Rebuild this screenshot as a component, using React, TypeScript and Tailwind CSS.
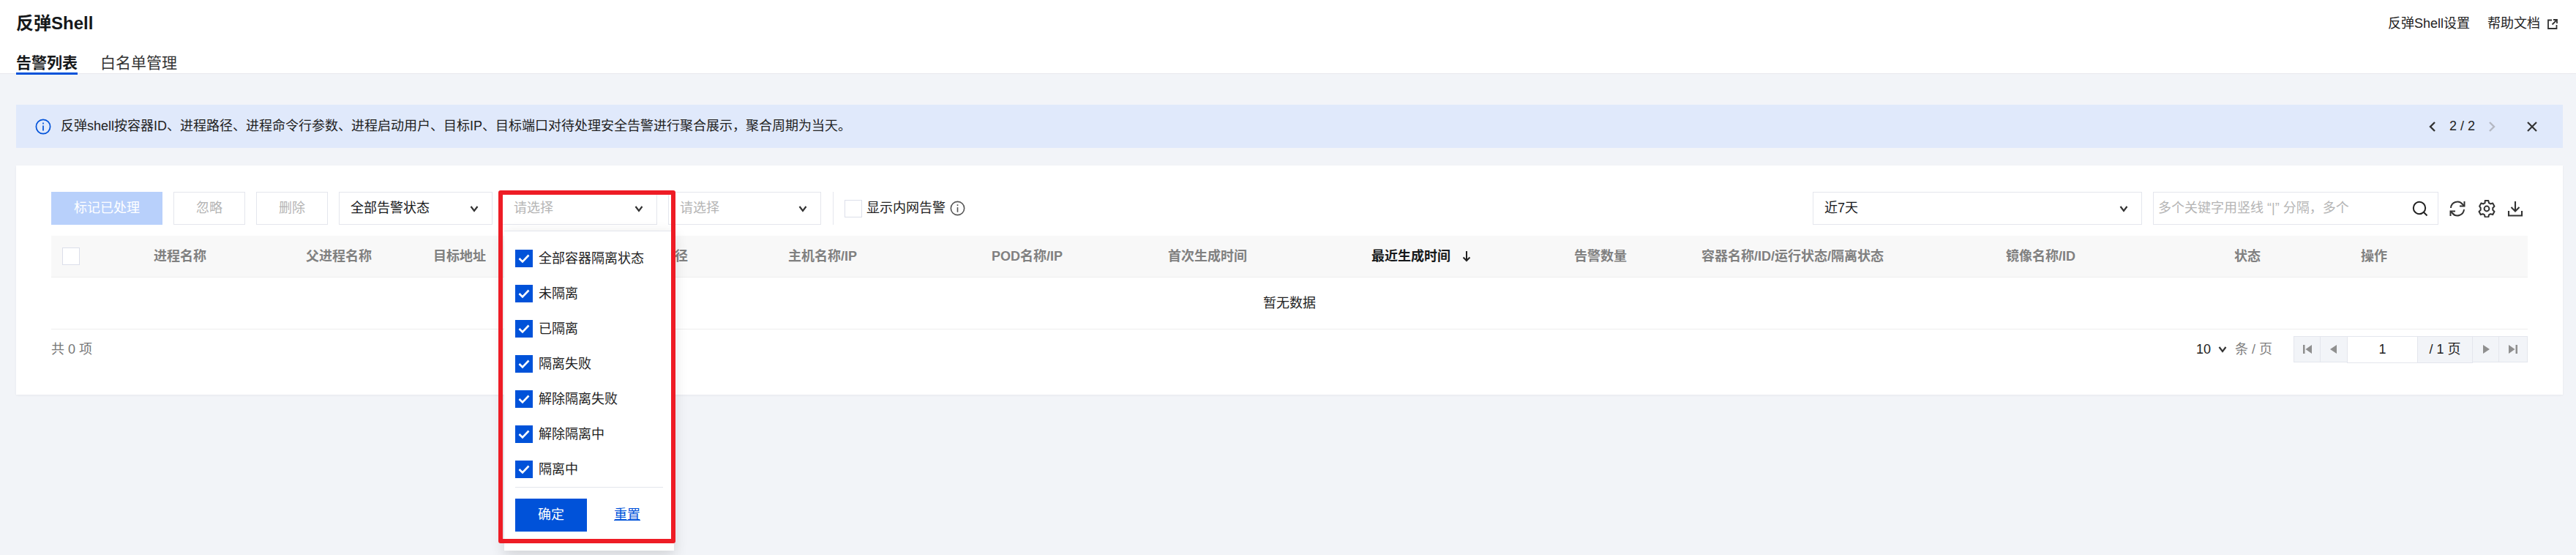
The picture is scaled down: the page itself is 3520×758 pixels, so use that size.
import React from "react";

const Chevron = ({ className = "" }: { className?: string }) => (
  <svg width="14" height="14" viewBox="0 0 14 14" fill="none" stroke="currentColor" strokeWidth="2.2" className={className}>
    <path d="M2.5 4 L7 10 L11.5 4" />
  </svg>
);

const Check = () => (
  <span className="w-[24px] h-[24px] bg-[#0052d9] flex items-center justify-center shrink-0">
    <svg width="18" height="18" viewBox="0 0 18 18" fill="none" stroke="#fff" strokeWidth="2.6">
      <path d="M2.5 9 L7 13.5 L15.5 4.5" />
    </svg>
  </span>
);

const Box = ({ className = "" }: { className?: string }) => (
  <span className={`block w-[24px] h-[24px] bg-white border border-[#dcdfea] ${className}`} />
);

const Select = ({ width, text, placeholder }: { width: string; text: string; placeholder?: boolean }) => (
  <div className={`${width} h-[45px] border border-[#e4e6ed] bg-white flex items-center justify-between pl-[15px] pr-[17px] text-[18px] ${placeholder ? "text-[#b5b5b5]" : "text-[#16181a]"}`}>
    <span>{text}</span>
    <Chevron className="text-[#333]" />
  </div>
);

const Info = ({ color, size }: { color: string; size: number }) => (
  <svg width={size} height={size} viewBox="0 0 22 22" fill="none" stroke={color} strokeWidth="1.7" className="shrink-0">
    <circle cx="11" cy="11" r="9.6" />
    <path d="M11 9.5 V16.5" />
    <path d="M11 5.5 V7.5" />
  </svg>
);

const columns: { label: string; cls: string; active?: boolean }[] = [
  { label: "进程名称", cls: "w-[208px]" },
  { label: "父进程名称", cls: "w-[174px]" },
  { label: "目标地址", cls: "w-[276px]" },
  { label: "进程路径", cls: "w-[209px]" },
  { label: "主机名称/IP", cls: "w-[278px]" },
  { label: "POD名称/IP", cls: "w-[241px]" },
  { label: "首次生成时间", cls: "w-[278px]" },
  { label: "最近生成时间", cls: "w-[277px]", active: true },
  { label: "告警数量", cls: "w-[174px]" },
  { label: "容器名称/ID/运行状态/隔离状态", cls: "w-[416px]" },
  { label: "镜像名称/ID", cls: "w-[312px]" },
  { label: "状态", cls: "w-[173px]" },
  { label: "操作", cls: "flex-1" },
];

const options = ["全部容器隔离状态", "未隔离", "已隔离", "隔离失败", "解除隔离失败", "解除隔离中", "隔离中"];

const PageBtn = ({ width, d }: { width: string; d: string }) => (
  <div className={`${width} h-[36px] bg-[#f2f4f8] border border-[#e4e6ed] -ml-px flex items-center justify-center`}>
    <svg width="14" height="16" viewBox="0 0 14 16" fill="#8f8f8f">
      <path d={d} />
    </svg>
  </div>
);

export default function App() {
  return (
    <div className="relative w-[3520px] h-[758px] overflow-hidden bg-[#f2f4f8] text-[18px] text-[#16181a] font-['Liberation_Sans','Noto_Sans_CJK_SC',sans-serif]">
      <header className="h-[101px] bg-white border-b border-[#e8e9ee] pl-[22px] pr-[22px] relative">
        <div className="h-[64px] flex items-center justify-between">
          <h1 className="text-[24px] font-bold leading-none text-[#16181a]">反弹Shell</h1>
          <div className="flex items-center text-[18px] text-[#222]">
            <span className="mr-[24px]">反弹Shell设置</span>
            <span className="mr-[10px]">帮助文档</span>
            <svg width="14" height="14" viewBox="0 0 14 14" fill="none" stroke="#333" strokeWidth="1.8" className="mt-[2px] mr-[3px]">
              <path d="M6 1.5 H1 V13 H12.5 V8" />
              <path d="M8 1 H13 V6" />
              <path d="M13 1 L6.5 7.5" />
            </svg>
          </div>
        </div>
        <nav className="flex text-[21px] gap-[31px] h-[37px] leading-[44px]">
          <span className="font-bold h-[38px] border-b-[3px] border-[#0052d9] relative">告警列表</span>
          <span className="text-[#333]">白名单管理</span>
        </nav>
      </header>

      <section className="mt-[42px] mx-[18px] ml-[22px] h-[59px] bg-[#e0e9fb] flex items-center pl-[26px] text-[18px] text-[#222]">
        <Info color="#0052d9" size={22} />
        <span className="ml-[13px]">反弹shell按容器ID、进程路径、进程命令行参数、进程启动用户、目标IP、目标端口对待处理安全告警进行聚合展示，聚合周期为当天。</span>
        <div className="ml-auto flex items-center mr-[34px]">
          <svg width="14" height="16" viewBox="0 0 14 16" fill="none" stroke="#333" strokeWidth="2.4" className="mr-[16px]">
            <path d="M10 2 L4 8 L10 14" />
          </svg>
          <span className="text-[#222] w-[35px] whitespace-nowrap">2 / 2</span>
          <svg width="14" height="16" viewBox="0 0 14 16" fill="none" stroke="#b4b8c2" strokeWidth="2.4" className="ml-[16px]">
            <path d="M4 2 L10 8 L4 14" />
          </svg>
          <svg width="16" height="16" viewBox="0 0 16 16" fill="none" stroke="#333" strokeWidth="2.2" className="ml-[40px]">
            <path d="M2 2 L14 14 M14 2 L2 14" />
          </svg>
        </div>
      </section>

      <section className="mt-[24px] ml-[22px] mr-[18px] h-[313px] bg-white px-[48px] pt-[36px] shadow-[0_1px_3px_rgba(0,0,0,0.05)]">
        <div className="flex items-center h-[45px]">
          <button className="w-[152px] h-[45px] bg-[#b8d0fb] text-white text-[18px]">标记已处理</button>
          <button className="w-[98px] h-[45px] ml-[15px] border border-[#e4e6ed] text-[#b5b5b5] text-[18px]">忽略</button>
          <button className="w-[98px] h-[45px] ml-[15px] border border-[#e4e6ed] text-[#b5b5b5] text-[18px]">删除</button>
          <Select width="w-[210px] ml-[15px]" text="全部告警状态" />
          <Select width="w-[212px] ml-[13px]" text="请选择" placeholder />
          <Select width="w-[209px] ml-[15px]" text="请选择" placeholder />
          <span className="w-px h-[45px] bg-[#e4e6ed] ml-[16px]" />
          <Box className="ml-[15px]" />
          <span className="ml-[6px] text-[#222]">显示内网告警</span>
          <span className="ml-[6px]"><Info color="#555" size={21} /></span>

          <div className="ml-auto flex items-center">
            <Select width="w-[450px]" text="近7天" />
            <div className="w-[390px] h-[45px] ml-[15px] border border-[#e4e6ed] flex items-center justify-between pl-[6px] pr-[13px] text-[#b5b5b5] text-[18px]">
              <span className="whitespace-pre">多个关键字用竖线 “|” 分隔，多个</span>
              <svg width="22" height="22" viewBox="0 0 22 22" fill="none" stroke="#222" strokeWidth="2">
                <circle cx="10" cy="10" r="8.2" />
                <path d="M16 16 L20.5 20.5" />
              </svg>
            </div>
            <svg width="24" height="24" viewBox="0 0 24 24" fill="none" stroke="#333" strokeWidth="2" className="ml-[14px]">
              <path d="M3 11 A9 9 0 0 1 19 6 L21 8" />
              <path d="M21.5 2 V8.5 H15" />
              <path d="M21 13 A9 9 0 0 1 5 18 L3 16" />
              <path d="M2.5 22 V15.5 H9" />
            </svg>
            <svg width="24" height="24" viewBox="0 0 24 24" fill="none" stroke="#333" strokeWidth="2" strokeLinejoin="round" className="ml-[16px]">
              <path d="M9.7 2 h4.6 l.7 3 2.2 1.2 3-.9 2.3 4-2.2 2.2 v2.6 l2.2 2.2-2.3 4-3-.9-2.2 1.2-.7 3 h-4.6 l-.7-3-2.2-1.2-3 .9-2.3-4 2.2-2.2 v-2.6 L2.1 9.3 l2.3-4 3 .9 2.2-1.2z" transform="translate(0 -1) scale(1 1.04)" />
              <circle cx="12" cy="12" r="3.4" />
            </svg>
            <svg width="24" height="24" viewBox="0 0 24 24" fill="none" stroke="#333" strokeWidth="2.1" className="ml-[15px] mr-[5px]">
              <path d="M12 2 V15" />
              <path d="M6.5 10 L12 15.5 L17.5 10" />
              <path d="M3 15 V21.5 H21 V15" />
            </svg>
          </div>
        </div>

        <div className="mt-[15px] flex items-center h-[57px] bg-[#f8f8f8] border-b border-[#eeeeee] font-bold text-[#808080] text-[18px] w-[3384px]">
          <div className="w-[140px] pl-[15px]"><Box /></div>
          {columns.map((c) => (
            <div key={c.label} className={`${c.cls} whitespace-nowrap flex items-center ${c.active ? "text-[#16181a]" : ""}`}>
              {c.label}
              {c.active && (
                <svg width="14" height="16" viewBox="0 0 14 16" fill="none" stroke="#222" strokeWidth="2" className="ml-[15px]">
                  <path d="M7 1 V14" />
                  <path d="M2.5 9.5 L7 14 L11.5 9.5" />
                </svg>
              )}
            </div>
          ))}
        </div>

        <div className="h-[71px] w-[3384px] border-b border-[#eeeeee] flex items-center justify-center text-[18px] text-[#222] pl-[0px]">
          暂无数据
        </div>

        <div className="w-[3384px] h-[54px] flex items-center justify-between text-[18px]">
          <span className="text-[#777]">共 0 项</span>
          <div className="flex items-center">
            <span className="text-[#222]">10</span>
            <Chevron className="ml-[9px] text-[#333]" />
            <span className="ml-[10px] text-[#808080]">条 / 页</span>
            <div className="ml-[30px] flex items-start">
              <PageBtn width="w-[37px]" d="M1 2 H3.5 V14 H1 Z M13 2 V14 L4.5 8 Z" />
              <PageBtn width="w-[38px]" d="M11 2 V14 L2 8 Z" />
              <div className="w-[97px] h-[37px] -ml-px border border-[#e4e6ed] bg-white flex items-center justify-center text-[#222]">1</div>
              <div className="w-[76px] h-[37px] -ml-px border border-[#e4e6ed] bg-[#f2f4f8] flex items-center justify-center text-[#222]">/ 1 页</div>
              <PageBtn width="w-[37px]" d="M3 2 V14 L12 8 Z" />
              <PageBtn width="w-[40px]" d="M10.5 2 H13 V14 H10.5 Z M1 2 V14 L9.5 8 Z" />
            </div>
          </div>
        </div>
      </section>

      {/* open dropdown */}
      <div className="absolute left-[689px] top-[315px] w-[232px] h-[437px] bg-white border-t border-[#e4e6ed] shadow-[0_6px_18px_rgba(0,0,0,0.14)] pt-[25px] px-[15px]">
        <ul className="flex flex-col gap-[24px]">
          {options.map((o) => (
            <li key={o} className="flex items-center h-[24px] gap-[8px] text-[18px] text-[#222]">
              <Check />
              <span>{o}</span>
            </li>
          ))}
        </ul>
        <div className="mt-[12px] pt-[15px] border-t border-[#e4e6ed] w-[202px] flex items-center">
          <button className="w-[98px] h-[45px] bg-[#0052d9] text-white text-[18px]">确定</button>
          <button className="ml-[37px] text-[#0052d9] text-[18px] underline">重置</button>
        </div>
      </div>

      {/* red highlight */}
      <div className="absolute left-[681px] top-[260px] w-[242px] h-[482px] border-[6px] border-[#ee1c25] rounded-[3px]" />
    </div>
  );
}
